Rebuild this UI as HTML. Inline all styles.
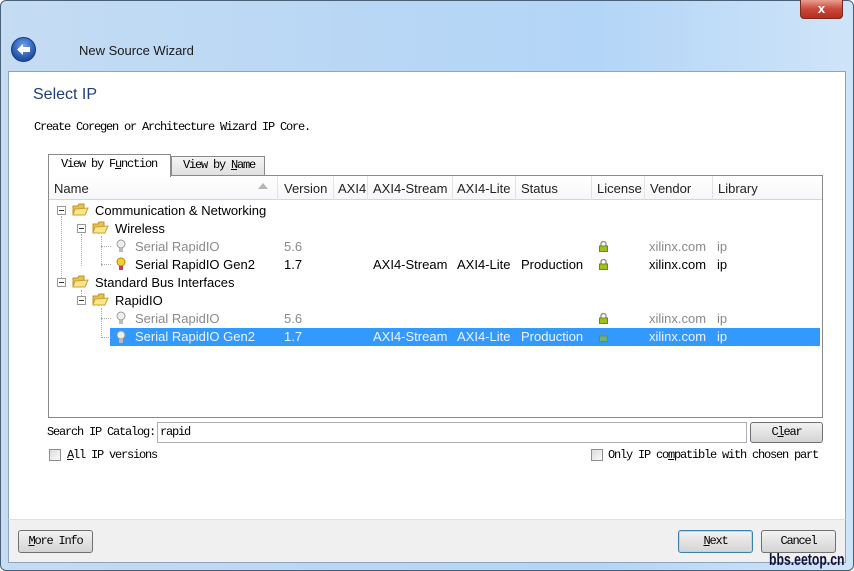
<!DOCTYPE html>
<html><head><style>
*{margin:0;padding:0;box-sizing:border-box}
body{width:854px;height:571px;overflow:hidden;background:#fff;font-family:"Liberation Sans",sans-serif;font-size:13px;color:#000;position:relative}
.abs{position:absolute}
.mono{font-family:"Liberation Mono",monospace;font-size:12px;letter-spacing:-1.2px}
.frame{left:0;top:0;width:854px;height:571px;background:linear-gradient(90deg,#c5dcf3 0%,#b9d7f5 40%,#b3d5f7 70%,#cfe4f8 100%);border:1px solid #4a5f78;border-radius:6px}
.t{white-space:nowrap}
.hdr{color:#222}
.g{color:#8a8a8a}
.btn{border:1px solid #707070;border-radius:3px;background:linear-gradient(#f2f2f2,#e3e3e3 50%,#d4d4d4);text-align:center}
.cb{width:12px;height:12px;border:1px solid #8e8f8f;background:linear-gradient(135deg,#dcdcdc,#fafafa)}
</style></head><body>
<div class="abs frame"></div>
<div class="abs" style="left:800px;top:0;width:43px;height:19px;border:1px solid #7a2a20;border-top:none;border-radius:0 0 4px 4px;background:linear-gradient(#e8a090,#c9483a 50%,#b13020);color:#fff;font-weight:bold;text-align:center;font-size:13px;line-height:18px">x</div>
<div class="abs" style="left:11px;top:37px;width:25px;height:25px;border-radius:50%;background:radial-gradient(circle at 50% 35%,#6fa5e8,#1f4fa8 70%);border:1px solid #163a7a"></div>
<svg class="abs" style="left:15px;top:42px" width="17" height="15" viewBox="0 0 17 15"><path d="M2 7.5 L8 2 L8 5 L15 5 L15 10 L8 10 L8 13 Z" fill="#fff"/></svg>
<div class="abs t" style="left:79px;top:43px;font-size:13px;color:#1a1a1a">New Source Wizard</div>
<div class="abs" style="left:8px;top:71px;width:838px;height:449px;background:#fff;border:1px solid #8fa4bd;border-bottom:none"></div>
<div class="abs" style="left:8px;top:519px;width:838px;height:44px;background:#f0f0f0;border:1px solid #8fa4bd;border-top:1px solid #dfdfdf"></div>
<div class="abs t" style="left:33px;top:86px;font-size:16px;color:#1e3f78">Select IP</div>
<div class="abs t mono" style="left:34px;top:120px">Create Coregen or Architecture Wizard IP Core.</div>
<div class="abs" style="left:171px;top:156px;width:94px;height:20px;border:1px solid #8a8a8a;background:linear-gradient(#f4f4f4,#e0e0e0)"></div>
<div class="abs t mono" style="left:183px;top:158px">View by <u>N</u>ame</div>
<div class="abs" style="left:48px;top:154px;width:123px;height:23px;border:1px solid #8a8a8a;border-bottom:none;background:#fff;z-index:2"></div>
<div class="abs t mono" style="left:61px;top:157px;z-index:3">View by F<u>u</u>nction</div>
<div class="abs" style="left:48px;top:175px;width:775px;height:243px;border:1px solid #8a8a8a;background:#fff"></div>
<div class="abs" style="left:49px;top:176px;width:773px;height:24px;background:linear-gradient(#fff,#f6f7f9);border-bottom:1px solid #d5d5d5"></div>
<svg class="abs" style="left:258px;top:183px" width="10" height="6"><path d="M0 6 L5 0 L10 6Z" fill="#b5b5b5"/></svg>
<div class="abs" style="left:277px;top:176px;width:1px;height:24px;background:#e3e3e3"></div>
<div class="abs" style="left:333px;top:176px;width:1px;height:24px;background:#e3e3e3"></div>
<div class="abs" style="left:367px;top:176px;width:1px;height:24px;background:#e3e3e3"></div>
<div class="abs" style="left:452px;top:176px;width:1px;height:24px;background:#e3e3e3"></div>
<div class="abs" style="left:515px;top:176px;width:1px;height:24px;background:#e3e3e3"></div>
<div class="abs" style="left:591px;top:176px;width:1px;height:24px;background:#e3e3e3"></div>
<div class="abs" style="left:644px;top:176px;width:1px;height:24px;background:#e3e3e3"></div>
<div class="abs" style="left:712px;top:176px;width:1px;height:24px;background:#e3e3e3"></div>
<div class="abs t hdr" style="left:54px;top:181px">Name</div>
<div class="abs t hdr" style="left:284px;top:181px">Version</div>
<div class="abs t hdr" style="left:338px;top:181px">AXI4</div>
<div class="abs t hdr" style="left:373px;top:181px">AXI4-Stream</div>
<div class="abs t hdr" style="left:457px;top:181px">AXI4-Lite</div>
<div class="abs t hdr" style="left:521px;top:181px">Status</div>
<div class="abs t hdr" style="left:597px;top:181px">License</div>
<div class="abs t hdr" style="left:650px;top:181px">Vendor</div>
<div class="abs t hdr" style="left:718px;top:181px">Library</div>
<div class="abs" style="left:110px;top:328px;width:710px;height:18px;background:#3399ff"></div>
<div class="abs" style="left:61px;top:216px;width:0;height:68px;border-left:1px dotted #aaa"></div>
<div class="abs" style="left:81px;top:234px;width:0;height:32px;border-left:1px dotted #aaa"></div>
<div class="abs" style="left:101px;top:236px;width:0;height:30px;border-left:1px dotted #aaa"></div>
<div class="abs" style="left:101px;top:246px;width:10px;border-top:1px dotted #aaa"></div>
<div class="abs" style="left:101px;top:264px;width:10px;border-top:1px dotted #aaa"></div>
<div class="abs" style="left:81px;top:290px;width:0;height:10px;border-left:1px dotted #aaa"></div>
<div class="abs" style="left:101px;top:308px;width:0;height:30px;border-left:1px dotted #aaa"></div>
<div class="abs" style="left:101px;top:318px;width:10px;border-top:1px dotted #aaa"></div>
<div class="abs" style="left:101px;top:337px;width:10px;border-top:1px dotted #aaa"></div>
<svg width="0" height="0" style="position:absolute"><defs>
<g id="ex"><rect x="0.5" y="0.5" width="8" height="8" fill="#fff" stroke="#999"/><path d="M2 4.5H7" stroke="#333"/></g>
<g id="fo"><path d="M1 4 L6 4 L7 2 L12 2 L12 13 L1 13Z" fill="#e8c34a" stroke="#b8902a"/><path d="M3 7 L16 6 L13 13 L1 13Z" fill="#fbe48a" stroke="#c9a034"/></g>
<g id="bulb"><circle cx="6" cy="5" r="4" fill="#f6d12a" stroke="#b08a10"/><rect x="4" y="9" width="4" height="4" fill="#c0406a"/></g>
<g id="bulbg"><circle cx="6" cy="5" r="4" fill="#eee" stroke="#999"/><rect x="4" y="9" width="4" height="4" fill="#bbb"/></g>
<g id="lk"><path d="M2 5 V3 a2.5 2.5 0 0 1 5 0 V5" fill="none" stroke="#888" stroke-width="1.3"/><rect x="0.5" y="5" width="8" height="5.5" fill="#9cc21c" stroke="#6a8a10"/></g>
</defs></svg>
<svg class="abs" style="left:57px;top:206px" width="9" height="9"><use href="#ex"/></svg>
<svg class="abs" style="left:72px;top:202px" width="17" height="15"><use href="#fo"/></svg>
<div class="abs t" style="left:95px;top:203px">Communication &amp; Networking</div>
<svg class="abs" style="left:77px;top:224px" width="9" height="9"><use href="#ex"/></svg>
<svg class="abs" style="left:92px;top:220px" width="17" height="15"><use href="#fo"/></svg>
<div class="abs t" style="left:115px;top:221px">Wireless</div>
<svg class="abs" style="left:115px;top:239px" width="12" height="14"><use href="#bulbg"/></svg>
<div class="abs t g" style="left:135px;top:239px">Serial RapidIO</div>
<div class="abs t g" style="left:284px;top:239px">5.6</div>
<svg class="abs" style="left:599px;top:241px" width="10" height="12"><use href="#lk"/></svg>
<div class="abs t g" style="left:649px;top:239px">xilinx.com</div>
<div class="abs t g" style="left:717px;top:239px">ip</div>
<svg class="abs" style="left:115px;top:257px" width="12" height="14"><use href="#bulb"/></svg>
<div class="abs t" style="left:135px;top:257px">Serial RapidIO Gen2</div>
<div class="abs t" style="left:284px;top:257px">1.7</div>
<div class="abs t" style="left:373px;top:257px">AXI4-Stream</div>
<div class="abs t" style="left:457px;top:257px">AXI4-Lite</div>
<div class="abs t" style="left:521px;top:257px">Production</div>
<svg class="abs" style="left:599px;top:259px" width="10" height="12"><use href="#lk"/></svg>
<div class="abs t" style="left:649px;top:257px">xilinx.com</div>
<div class="abs t" style="left:717px;top:257px">ip</div>
<svg class="abs" style="left:57px;top:278px" width="9" height="9"><use href="#ex"/></svg>
<svg class="abs" style="left:72px;top:274px" width="17" height="15"><use href="#fo"/></svg>
<div class="abs t" style="left:95px;top:275px">Standard Bus Interfaces</div>
<svg class="abs" style="left:77px;top:296px" width="9" height="9"><use href="#ex"/></svg>
<svg class="abs" style="left:92px;top:292px" width="17" height="15"><use href="#fo"/></svg>
<div class="abs t" style="left:115px;top:293px">RapidIO</div>
<svg class="abs" style="left:115px;top:311px" width="12" height="14"><use href="#bulbg"/></svg>
<div class="abs t g" style="left:135px;top:311px">Serial RapidIO</div>
<div class="abs t g" style="left:284px;top:311px">5.6</div>
<svg class="abs" style="left:599px;top:313px" width="10" height="12"><use href="#lk"/></svg>
<div class="abs t g" style="left:649px;top:311px">xilinx.com</div>
<div class="abs t g" style="left:717px;top:311px">ip</div>
<svg class="abs" style="left:115px;top:330px" width="12" height="14"><use href="#bulbg"/></svg>
<div class="abs t" style="left:135px;top:329px;color:#eaf3ff">Serial RapidIO Gen2</div>
<div class="abs t" style="left:284px;top:329px;color:#eaf3ff">1.7</div>
<div class="abs t" style="left:373px;top:329px;color:#eaf3ff">AXI4-Stream</div>
<div class="abs t" style="left:457px;top:329px;color:#eaf3ff">AXI4-Lite</div>
<div class="abs t" style="left:521px;top:329px;color:#eaf3ff">Production</div>
<svg class="abs" style="left:599px;top:331px;opacity:.6" width="10" height="12"><use href="#lk"/></svg>
<div class="abs t" style="left:649px;top:329px;color:#eaf3ff">xilinx.com</div>
<div class="abs t" style="left:717px;top:329px;color:#eaf3ff">ip</div>
<div class="abs t mono" style="left:47px;top:425px">Search IP Catalog:</div>
<div class="abs" style="left:157px;top:422px;width:590px;height:21px;border:1px solid #abadb3;background:#fff"></div>
<div class="abs t mono" style="left:160px;top:425px">rapid</div>
<div class="abs btn mono" style="left:750px;top:422px;width:73px;height:21px;line-height:19px">C<u>l</u>ear</div>
<div class="abs cb" style="left:49px;top:449px"></div>
<div class="abs t mono" style="left:67px;top:448px"><u>A</u>ll IP versions</div>
<div class="abs cb" style="left:591px;top:449px"></div>
<div class="abs t mono" style="left:608px;top:448px">Only IP co<u>m</u>patible with chosen part</div>
<div class="abs btn mono" style="left:18px;top:530px;width:75px;height:23px;line-height:21px"><u>M</u>ore Info</div>
<div class="abs btn mono" style="left:678px;top:530px;width:75px;height:23px;line-height:21px;border-color:#3c7fb1;box-shadow:inset 0 0 0 1px #a8dcf6"><u>N</u>ext</div>
<div class="abs btn mono" style="left:761px;top:530px;width:75px;height:23px;line-height:21px">Cancel</div>
<div class="abs t" style="left:769px;top:550px;font-size:17px;font-weight:bold;color:#111140;transform:scaleX(.72);transform-origin:left">bbs.eetop.cn</div>
</body></html>
